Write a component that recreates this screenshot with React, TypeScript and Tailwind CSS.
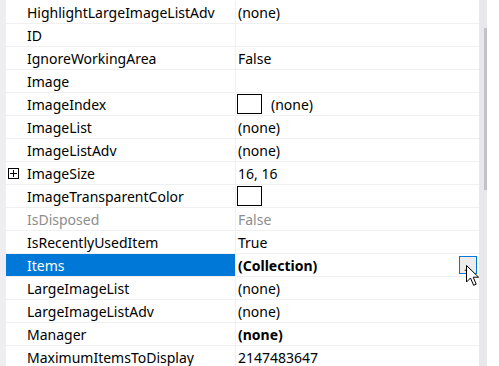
import React from "react";

type Row = {
  label: string;
  value?: string;
  kind?: "swatch" | "swatchOnly" | "selected" | "disabled" | "bold" | "expand";
};

const rows: Row[] = [
  { label: "HighlightLargeImageListAdv", value: "(none)" },
  { label: "ID", value: "" },
  { label: "IgnoreWorkingArea", value: "False" },
  { label: "Image", value: "" },
  { label: "ImageIndex", value: "(none)", kind: "swatch" },
  { label: "ImageList", value: "(none)" },
  { label: "ImageListAdv", value: "(none)" },
  { label: "ImageSize", value: "16, 16", kind: "expand" },
  { label: "ImageTransparentColor", value: "", kind: "swatchOnly" },
  { label: "IsDisposed", value: "False", kind: "disabled" },
  { label: "IsRecentlyUsedItem", value: "True" },
  { label: "Items", value: "(Collection)", kind: "selected" },
  { label: "LargeImageList", value: "(none)" },
  { label: "LargeImageListAdv", value: "(none)" },
  { label: "Manager", value: "(none)", kind: "bold" },
  { label: "MaximumItemsToDisplay", value: "2147483647" },
];

function Swatch() {
  return <div className="ml-[-1px] h-[20px] w-[25px] shrink-0 border border-black bg-white" />;
}

function ExpandBox() {
  return (
    <div className="absolute left-[2px] top-[6px] flex h-[11px] w-[11px] items-center justify-center border border-black bg-white">
      <div className="relative h-[7px] w-[7px]">
        <div className="absolute left-0 top-[3px] h-px w-[7px] bg-black" />
        <div className="absolute left-[3px] top-0 h-[7px] w-px bg-black" />
      </div>
    </div>
  );
}

function Cursor() {
  return (
    <svg
      className="pointer-events-none absolute left-[466px] top-[265px]"
      width="14"
      height="22"
      viewBox="0 0 14 22"
    >
      <path
        d="M0.5 0.5 L0.5 17 L4.5 13 L7.6 20.3 L10.2 19.2 L7.2 12.2 L12.6 12.2 Z"
        fill="#ffffff"
        stroke="#000000"
        strokeWidth="1"
        strokeLinejoin="miter"
      />
    </svg>
  );
}

function PropRow({ row }: { row: Row }) {
  const selected = row.kind === "selected";
  const disabled = row.kind === "disabled";
  const bold = row.kind === "bold" || selected;
  return (
    <div className="flex h-[23px] shrink-0 border-b border-[#f0f0f0]">
      <div
        className={
          selected
            ? "relative flex w-[230px] shrink-0 items-center border-r border-[#f0f0f0] bg-[#0078d7] pl-[21px] text-white"
            : disabled
            ? "relative flex w-[230px] shrink-0 items-center border-r border-[#f0f0f0] pl-[21px] text-[#8d8d8d]"
            : "relative flex w-[230px] shrink-0 items-center border-r border-[#f0f0f0] pl-[21px] text-black"
        }
      >
        {row.kind === "expand" && <ExpandBox />}
        <span className="whitespace-nowrap">{row.label}</span>
      </div>
      <div
        className={
          disabled
            ? "flex min-w-0 flex-1 items-center pl-[2px] text-[#8d8d8d]"
            : "flex min-w-0 flex-1 items-center pl-[2px] text-black"
        }
      >
        {(row.kind === "swatch" || row.kind === "swatchOnly") && <Swatch />}
        {row.kind === "swatch" && <span className="ml-[9px] whitespace-nowrap">{row.value}</span>}
        {row.kind !== "swatch" && row.kind !== "swatchOnly" && (
          <span className={bold ? "whitespace-nowrap font-bold" : "whitespace-nowrap"}>{row.value}</span>
        )}
        {selected && (
          <div className="ml-auto mr-[2px] flex h-[18px] w-[18px] items-end justify-center border border-[#0078d7] bg-[#ececec] pb-[1px] text-[10px] leading-[10px] text-black">
            ...
          </div>
        )}
      </div>
    </div>
  );
}

export default function App() {
  return (
    <div className="relative flex h-[366px] w-[499px] overflow-hidden bg-white font-['Noto_Sans',sans-serif] text-[14px] leading-[19px]">
      <div className="w-[6px] shrink-0 bg-[#eeeef2]" />
      <div className="flex w-[473px] shrink-0 flex-col pt-px">
        {rows.map((r) => (
          <PropRow key={r.label} row={r} />
        ))}
      </div>
      <div className="flex w-[8px] shrink-0 flex-col items-end bg-[#e8e8ec] pt-[28px]">
        <div className="h-[162px] w-[3px] bg-[#c2c2c8]" />
      </div>
      <div className="flex-1 bg-white" />
      <Cursor />
    </div>
  );
}
